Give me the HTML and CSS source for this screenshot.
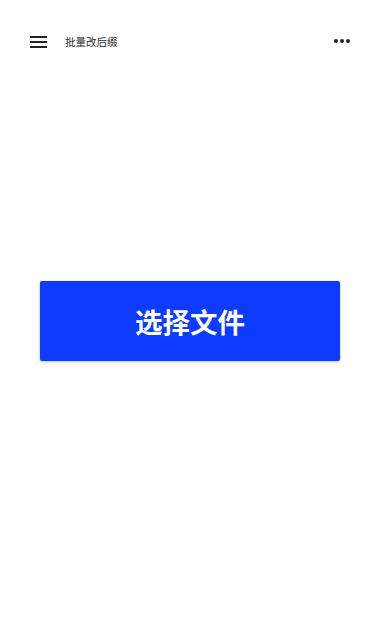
FILE: index.html
```html
<!DOCTYPE html>
<html lang="zh">
<head>
<meta charset="utf-8">
<link rel="stylesheet" href="styles.css">
</head>
<body>
<div class="app">
  <header class="bar">
    <button class="icon menu" aria-label="menu">
      <svg width="17" height="14" viewBox="0 0 17 14"><rect x="0" y="1" width="17" height="2" fill="#222"/><rect x="0" y="6" width="17" height="2" fill="#222"/><rect x="0" y="11" width="17" height="2" fill="#222"/></svg>
    </button>
    <div class="title">批量改后缀</div>
    <button class="icon more" aria-label="more">
      <svg width="16" height="4" viewBox="0 0 16 4"><circle cx="2" cy="2" r="2" fill="#222"/><circle cx="8" cy="2" r="2" fill="#222"/><circle cx="14" cy="2" r="2" fill="#222"/></svg>
    </button>
  </header>
  <main class="main">
    <button class="pick">选择文件</button>
  </main>
</div>
</body>
</html>
```
FILE: styles.css
```css
html, body { margin: 0; padding: 0; background: #fff; }
body { font-family: "Noto Sans CJK SC", "Noto Sans", sans-serif; }
.app { width: 380px; height: 640px; display: flex; flex-direction: column; }
.bar { margin-top: 16px; height: 52px; display: flex; align-items: flex-start; padding: 19px 30px 0 30px; box-sizing: border-box; }
.icon { border: 0; background: none; padding: 0; display: flex; line-height: 0; }
.title { margin-left: 18px; font-size: 10.5px; color: #2a2a2a; line-height: 14px; margin-top: 0; }
.more { margin-left: auto; margin-top: 4px; }
.main { flex: 1; display: flex; flex-direction: column; align-items: center; padding-top: 213px; }
.pick { width: 300px; height: 80px; border: 0; border-radius: 2px; background: #0d3bff; color: #fff; font-family: "Noto Sans CJK SC", sans-serif; font-weight: 700; font-size: 27.5px; box-shadow: 0 1px 3px rgba(0,0,0,0.25); cursor: pointer; }
```
